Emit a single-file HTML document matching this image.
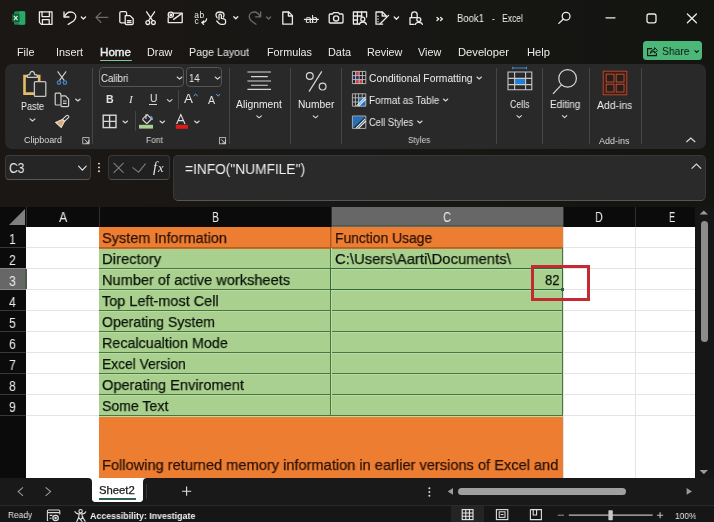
<!DOCTYPE html><html><head><meta charset="utf-8"><style>
html,body{margin:0;padding:0;width:714px;height:522px;overflow:hidden;background:linear-gradient(90deg,#1b1714 0%,#181715 50%,#131511 100%);font-family:"Liberation Sans",sans-serif;}
.r{position:absolute;}
.t{position:absolute;line-height:0;white-space:nowrap;will-change:transform;}
svg.r{overflow:visible;will-change:transform}
</style></head><body>
<svg class="r" style="left:0px;top:0px;" width="40" height="36" viewBox="0 0 40 36"><rect x="14" y="11.2" width="11.2" height="13.6" rx="1.6" fill="#1a8a52"/>
<rect x="19" y="11.2" width="6.2" height="13.6" rx="1.2" fill="#2aa86a"/>
<rect x="11.9" y="14" width="7.7" height="8" rx="1" fill="#135e36"/>
<path d="M13.9 15.8 L17.6 20.2 M17.6 15.8 L13.9 20.2" stroke="#d8f5e0" stroke-width="1.2"/></svg>
<svg class="r" style="left:0px;top:0px;" width="60" height="36" viewBox="0 0 60 36"><path d="M39.4 11.8 H52 V24.4 H41.4 L39.4 22.4 Z" fill="none" stroke="#ebebeb" stroke-width="1.3" stroke-linecap="round" stroke-linejoin="round"/>
<path d="M42 11.8 V16.6 H49.4 V11.8" fill="none" stroke="#ebebeb" stroke-width="1.3" stroke-linecap="round" stroke-linejoin="round"/>
<path d="M42.4 24.4 V19.6 H49.2 V24.4" fill="none" stroke="#ebebeb" stroke-width="1.3" stroke-linecap="round" stroke-linejoin="round"/></svg>
<svg class="r" style="left:0px;top:0px;" width="90" height="36" viewBox="0 0 90 36"><path d="M64 12 V17 H69" fill="none" stroke="#ebebeb" stroke-width="1.3" stroke-linecap="round" stroke-linejoin="round"/>
<path d="M64.4 16.6 C66 13.6 68 12 70.5 12 C73.6 12 75.8 14.2 75.8 16.8 C75.8 18.6 75 19.6 73.6 21 L68.2 24.4" fill="none" stroke="#ebebeb" stroke-width="1.3" stroke-linecap="round" stroke-linejoin="round"/>
<path d="M81.3 17 L83.4 19 L85.5 17" fill="none" stroke="#ebebeb" stroke-width="1.3" stroke-linecap="round" stroke-linejoin="round"/></svg>
<svg class="r" style="left:0px;top:0px;" width="112" height="36" viewBox="0 0 112 36"><path d="M96 17.4 H107.8 M100.8 12.6 L96 17.4 L100.8 22.2" fill="none" stroke="#6c6c6c" stroke-width="1.3" stroke-linecap="round" stroke-linejoin="round"/></svg>
<svg class="r" style="left:0px;top:0px;" width="140" height="36" viewBox="0 0 140 36"><path d="M125 22.8 H121.2 Q119.8 22.8 119.8 21.4 V13 Q119.8 11.6 121.2 11.6 H125.4 Q126.4 11.6 126.6 13 V15.4" fill="none" stroke="#ebebeb" stroke-width="1.3" stroke-linecap="round" stroke-linejoin="round"/>
<path d="M125.2 15.6 H130 L133.2 18.8 V23.4 Q133.2 24.5 132 24.5 H126.4 Q125.2 24.5 125.2 23.3 Z" fill="none" stroke="#ebebeb" stroke-width="1.3" stroke-linecap="round" stroke-linejoin="round"/>
<path d="M127.4 20.6 H131 M127.4 22.4 H131" fill="none" stroke="#ebebeb" stroke-width="1.3" stroke-linecap="round" stroke-linejoin="round"/></svg>
<svg class="r" style="left:0px;top:0px;" width="160" height="36" viewBox="0 0 160 36"><path d="M146.6 11.8 L152.6 20.6 M154.6 11.8 L148.6 20.6" fill="none" stroke="#ebebeb" stroke-width="1.3" stroke-linecap="round" stroke-linejoin="round"/>
<circle cx="147.8" cy="22.6" r="1.9" fill="none" stroke="#ebebeb" stroke-width="1.3" stroke-linecap="round" stroke-linejoin="round"/><circle cx="153.4" cy="22.6" r="1.9" fill="none" stroke="#ebebeb" stroke-width="1.3" stroke-linecap="round" stroke-linejoin="round"/></svg>
<svg class="r" style="left:0px;top:0px;" width="190" height="36" viewBox="0 0 190 36"><path d="M173 13.2 H182.2 V22.6 H168.2 V17.6" fill="none" stroke="#ebebeb" stroke-width="1.3" stroke-linecap="round" stroke-linejoin="round"/>
<path d="M173.6 19.4 L182 13.4" fill="none" stroke="#ebebeb" stroke-width="1.3" stroke-linecap="round" stroke-linejoin="round"/>
<circle cx="170.8" cy="14.8" r="2.6" fill="none" stroke="#ebebeb" stroke-width="1.3" stroke-linecap="round" stroke-linejoin="round"/><circle cx="170.9" cy="14.9" r="0.8" fill="none" stroke="#ebebeb" stroke-width="1.3" stroke-linecap="round" stroke-linejoin="round"/></svg>
<svg class="r" style="left:0px;top:0px;" width="212" height="36" viewBox="0 0 212 36"><text x="194.2" y="17.6" font-family="Liberation Sans" font-size="8.4" textLength="10" fill="#ebebeb">ab</text>
<text x="194.4" y="23.8" font-family="Liberation Sans" font-size="8.4" fill="#ebebeb">c</text>
<path d="M206.6 19 Q206 22.4 202.4 22.6 M203.8 21 L201.8 22.6 L203.6 24.2" fill="none" stroke="#ebebeb" stroke-width="1.3" stroke-linecap="round" stroke-linejoin="round"/></svg>
<svg class="r" style="left:0px;top:0px;" width="245" height="36" viewBox="0 0 245 36"><path d="M219 19.6 V15.6 Q219 14.2 220.2 14.2 Q221.4 14.2 221.4 15.6 V18.4 L224 18.8 Q225.6 19.2 225.6 21 V22.6 Q225.6 24.4 223.8 24.4 H221 Q219.8 24.4 218.8 23.2 L216.8 21" fill="none" stroke="#ebebeb" stroke-width="1.3" stroke-linecap="round" stroke-linejoin="round"/>
<path d="M217.2 17.8 Q216 16.4 216 15 Q216 12 220 12 Q224 12 224 15 Q224 16.2 223.4 17" fill="none" stroke="#ebebeb" stroke-width="1.3" stroke-linecap="round" stroke-linejoin="round"/>
<path d="M233.8 16.8 L235.8 18.8 L237.8 16.8" fill="none" stroke="#ebebeb" stroke-width="1.3" stroke-linecap="round" stroke-linejoin="round"/></svg>
<svg class="r" style="left:0px;top:0px;" width="275" height="36" viewBox="0 0 275 36"><path d="M260.6 11.8 V16.8 H255.6" fill="none" stroke="#6c6c6c" stroke-width="1.3" stroke-linecap="round" stroke-linejoin="round"/>
<path d="M260.2 16.4 C258.6 13.4 256.6 12 254.2 12 C251.2 12 249.2 14.2 249.2 16.8 C249.2 18.6 250 19.6 251.4 21 L256 24.2" fill="none" stroke="#6c6c6c" stroke-width="1.3" stroke-linecap="round" stroke-linejoin="round"/>
<path d="M266.6 17 L268.6 19 L270.6 17" fill="none" stroke="#6c6c6c" stroke-width="1.3" stroke-linecap="round" stroke-linejoin="round"/></svg>
<svg class="r" style="left:0px;top:0px;" width="300" height="36" viewBox="0 0 300 36"><path d="M282.8 12 H288.8 L292.4 15.6 V24.2 H282.8 Z" fill="none" stroke="#ebebeb" stroke-width="1.3" stroke-linecap="round" stroke-linejoin="round"/>
<path d="M288.4 12.2 V16 H292.2" fill="none" stroke="#ebebeb" stroke-width="1.3" stroke-linecap="round" stroke-linejoin="round"/></svg>
<svg class="r" style="left:0px;top:0px;" width="325" height="36" viewBox="0 0 325 36"><text x="305.2" y="22.8" font-family="Liberation Sans" font-size="11.6" textLength="12.4" fill="#ebebeb">ab</text>
<path d="M304.4 19.3 H318.4" fill="none" stroke="#ebebeb" stroke-width="1.3" stroke-linecap="round" stroke-linejoin="round"/></svg>
<svg class="r" style="left:0px;top:0px;" width="350" height="36" viewBox="0 0 350 36"><path d="M329.2 15 Q329.2 14 330.2 14 H332.4 L333.6 12.6 H338.4 L339.6 14 H342 Q343 14 343 15 V22.2 Q343 23 342 23 H330.2 Q329.2 23 329.2 22.2 Z" fill="none" stroke="#ebebeb" stroke-width="1.3" stroke-linecap="round" stroke-linejoin="round"/>
<circle cx="336.1" cy="18.4" r="2.6" fill="none" stroke="#ebebeb" stroke-width="1.3" stroke-linecap="round" stroke-linejoin="round"/></svg>
<svg class="r" style="left:0px;top:0px;" width="372" height="36" viewBox="0 0 372 36"><path d="M358.6 24 H353.4 V12 H366.6 V17" fill="none" stroke="#ebebeb" stroke-width="1.3" stroke-linecap="round" stroke-linejoin="round"/>
<path d="M353.4 16 H362 M353.4 20 H357.6 M357.4 12 V24 M361.6 12 V17" fill="none" stroke="#ebebeb" stroke-width="1.3" stroke-linecap="round" stroke-linejoin="round"/>
<circle cx="362.8" cy="19.2" r="2" fill="none" stroke="#ebebeb" stroke-width="1.3" stroke-linecap="round" stroke-linejoin="round"/><path d="M359.4 24.4 Q359.8 22 362.8 22 Q365.8 22 366.4 24.4" fill="none" stroke="#ebebeb" stroke-width="1.3" stroke-linecap="round" stroke-linejoin="round"/></svg>
<svg class="r" style="left:0px;top:0px;" width="402" height="36" viewBox="0 0 402 36"><path d="M382.6 24.2 H376 V12 H382.4 L386.2 15.8 V17" fill="none" stroke="#ebebeb" stroke-width="1.3" stroke-linecap="round" stroke-linejoin="round"/>
<path d="M382.2 12.2 V16 H386" fill="none" stroke="#ebebeb" stroke-width="1.3" stroke-linecap="round" stroke-linejoin="round"/>
<path d="M380.2 23.8 L388.6 15.4 M381.4 22.6 L388.6 15.4" fill="none" stroke="#ebebeb" stroke-width="1.3" stroke-linecap="round" stroke-linejoin="round"/>
<path d="M378 16.2 V16.4 M378 19 V19.2 M378 21.6 V21.8" fill="none" stroke="#ebebeb" stroke-width="1.3" stroke-linecap="round" stroke-linejoin="round"/>
<path d="M394.2 17 L396.4 19.2 L398.6 17" fill="none" stroke="#ebebeb" stroke-width="1.3" stroke-linecap="round" stroke-linejoin="round"/></svg>
<svg class="r" style="left:0px;top:0px;" width="428" height="36" viewBox="0 0 428 36"><path d="M411.6 17.4 V14.6 Q411.6 11.8 414.4 11.8 Q417.2 11.8 417.2 14.6 V17.4" fill="none" stroke="#ebebeb" stroke-width="1.3" stroke-linecap="round" stroke-linejoin="round"/>
<path d="M414 24.4 H410 V17.6 H416.6" fill="none" stroke="#ebebeb" stroke-width="1.3" stroke-linecap="round" stroke-linejoin="round"/>
<circle cx="418.8" cy="19.6" r="2" fill="none" stroke="#ebebeb" stroke-width="1.3" stroke-linecap="round" stroke-linejoin="round"/><path d="M415.4 24.4 Q415.8 22.4 418.8 22.4 Q421.8 22.4 422.4 24.4" fill="none" stroke="#ebebeb" stroke-width="1.3" stroke-linecap="round" stroke-linejoin="round"/></svg>
<svg class="r" style="left:0px;top:0px;" width="450" height="36" viewBox="0 0 450 36"><path d="M437 17.4 L438.8 19 L437 20.6 M440.6 17.4 L442.4 19 L440.6 20.6" fill="none" stroke="#ebebeb" stroke-width="1.3" stroke-linecap="round" stroke-linejoin="round"/></svg>
<svg class="r" style="left:0px;top:0px;" width="580" height="36" viewBox="0 0 580 36"><circle cx="566.1" cy="16.2" r="3.9" fill="none" stroke="#ebebeb" stroke-width="1.3" stroke-linecap="round" stroke-linejoin="round"/><path d="M563.4 19 L558.8 23.4" fill="none" stroke="#ebebeb" stroke-width="1.3" stroke-linecap="round" stroke-linejoin="round"/></svg>
<svg class="r" style="left:0px;top:0px;" width="714" height="36" viewBox="0 0 714 36"><path d="M606 17.8 H615" fill="none" stroke="#ebebeb" stroke-width="1.3" stroke-linecap="round" stroke-linejoin="round"/>
<rect x="647" y="14" width="9" height="8.8" rx="2" fill="none" stroke="#ebebeb" stroke-width="1.3" stroke-linecap="round" stroke-linejoin="round"/>
<path d="M687.4 14 L696.4 22.8 M696.4 14 L687.4 22.8" fill="none" stroke="#ebebeb" stroke-width="1.3" stroke-linecap="round" stroke-linejoin="round"/></svg>
<div class="r" style="left:5px;top:64px;width:701px;height:85px;background:#292929;border-radius:7px;"></div>
<div class="r" style="left:92.1px;top:68px;width:1px;height:76px;background:#454545;"></div>
<div class="r" style="left:229.2px;top:68px;width:1px;height:76px;background:#454545;"></div>
<div class="r" style="left:290.4px;top:68px;width:1px;height:76px;background:#454545;"></div>
<div class="r" style="left:340.8px;top:68px;width:1px;height:76px;background:#454545;"></div>
<div class="r" style="left:496.3px;top:68px;width:1px;height:76px;background:#454545;"></div>
<div class="r" style="left:541.9px;top:68px;width:1px;height:76px;background:#454545;"></div>
<div class="r" style="left:588.5px;top:68px;width:1px;height:76px;background:#454545;"></div>
<div class="r" style="left:641.0px;top:68px;width:1px;height:76px;background:#454545;"></div>
<svg class="r" style="left:0px;top:0px;" width="100" height="150" viewBox="0 0 100 150"><path d="M30 76 H24.5 V93.6 H34" fill="none" stroke="#e6bd66" stroke-width="2.6"/>
<path d="M34 76 H39.2 V81" fill="none" stroke="#e6bd66" stroke-width="2.6"/>
<path d="M27.4 77.4 H37.2 V76 Q37.2 74.6 35.6 74.6 H34.6 Q34.4 71.4 32.2 71.4 Q30 71.4 29.8 74.6 H28.8 Q27.4 74.6 27.4 76 Z" fill="#2a2a2a" stroke="#c8c8c8" stroke-width="1.2"/>
<rect x="34.4" y="81.6" width="11.4" height="14.8" rx="1" fill="#2a2a2a" stroke="#c4c4c4" stroke-width="1.3"/>
<path d="M57.6 71.4 L64.4 80.6 M66.2 71.4 L59.4 80.6" stroke="#d0d0d0" stroke-width="1.1" fill="none"/>
<circle cx="59" cy="82.6" r="1.7" fill="none" stroke="#4482c4" stroke-width="1.3"/>
<circle cx="64.9" cy="82.6" r="1.7" fill="none" stroke="#4482c4" stroke-width="1.3"/>
<path d="M60.6 105 H56.2 Q55.2 105 55.2 104 V94 Q55.2 93.2 56.2 93.2 H59.8 Q60.8 93.2 60.8 94.2 V95.6" fill="none" stroke="#cfcfcf" stroke-width="1.2"/>
<path d="M61 95.8 H65.4 L68.6 99 V105.6 Q68.6 106.6 67.6 106.6 H62 Q61 106.6 61 105.6 Z" fill="none" stroke="#cfcfcf" stroke-width="1.2"/>
<path d="M63 101 H66.6 M63 103.4 H66.6" stroke="#cfcfcf" stroke-width="1.1"/>
<path d="M68.2 115.6 Q69.4 116.6 68.4 117.6 L64.4 121.4 L62.4 119.4 L66.4 115.6 Q67.4 114.8 68.2 115.6 Z" fill="none" stroke="#e0e0e0" stroke-width="1.1"/>
<path d="M62.4 119.4 L64.4 121.4 L61.2 127.4 L55.6 122.4 Z" fill="#e8a766" stroke="#e0e0e0" stroke-width="1.1" stroke-linejoin="round"/></svg>
<div class="t" style="left:21.0px;top:106.80px;font-size:10.4px;color:#ededed;font-weight:normal;transform:scaleX(0.8656);transform-origin:0 0;">Paste</div>
<svg class="r" style="left:0px;top:0px;pointer-events:none" width="714" height="522" viewBox="0 0 714 522"><path d="M30 118.8 L32.5 121.0 L35 118.8" fill="none" stroke="#d8d8d8" stroke-width="1.1" stroke-linecap="round" stroke-linejoin="round"/></svg>
<svg class="r" style="left:0px;top:0px;pointer-events:none" width="714" height="522" viewBox="0 0 714 522"><path d="M75.6 99 L77.89999999999999 101 L80.19999999999999 99" fill="none" stroke="#d8d8d8" stroke-width="1.1" stroke-linecap="round" stroke-linejoin="round"/></svg>
<div class="t" style="left:24.0px;top:140.15px;font-size:8.8px;color:#d8d8d8;font-weight:normal;transform:scaleX(1.0089);transform-origin:0 0;">Clipboard</div>
<svg class="r" style="left:0px;top:0px;" width="100" height="150" viewBox="0 0 100 150"><rect x="82.8" y="137.6" width="6.2" height="6.2" fill="none" stroke="#bdbdbd" stroke-width="0.9"/><path d="M84.6 139.4 L88.6 143.4 M85.6 143.2 H88.8 V140" fill="none" stroke="#d0d0d0" stroke-width="1"/></svg>
<div class="r" style="left:99.4px;top:67.4px;width:85px;height:20px;background:transparent;box-sizing:border-box;border:1px solid #555;border-radius:4px;"></div>
<div class="r" style="left:186.4px;top:67.4px;width:36px;height:20px;background:transparent;box-sizing:border-box;border:1px solid #555;border-radius:4px;"></div>
<div class="t" style="left:101.3px;top:78.13px;font-size:10.6px;color:#ededed;font-weight:normal;transform:scaleX(0.9051);transform-origin:0 0;">Calibri</div>
<div class="t" style="left:188.9px;top:78.13px;font-size:10.6px;color:#ededed;font-weight:normal;transform:scaleX(0.8754);transform-origin:0 0;">14</div>
<svg class="r" style="left:0px;top:0px;pointer-events:none" width="714" height="522" viewBox="0 0 714 522"><path d="M177.2 77 L179.6 79.2 L182.0 77" fill="none" stroke="#d8d8d8" stroke-width="1.1" stroke-linecap="round" stroke-linejoin="round"/></svg>
<svg class="r" style="left:0px;top:0px;pointer-events:none" width="714" height="522" viewBox="0 0 714 522"><path d="M215.2 77 L217.6 79.2 L220.0 77" fill="none" stroke="#d8d8d8" stroke-width="1.1" stroke-linecap="round" stroke-linejoin="round"/></svg>
<div class="t" style="left:106.2px;top:99.23px;font-size:10.6px;color:#e0e0e0;font-weight:bold;">B</div>
<div class="t" style="left:128.6px;top:98.95px;font-size:11.4px;color:#e0e0e0;font-weight:normal;font-family:'Liberation Serif',serif;font-style:italic;">I</div>
<div class="t" style="left:149.6px;top:98.80px;font-size:10.4px;color:#e0e0e0;font-weight:normal;">U</div>
<div class="r" style="left:149.4px;top:104px;width:8px;height:1.2px;background:#d8d8d8;"></div>
<svg class="r" style="left:0px;top:0px;pointer-events:none" width="714" height="522" viewBox="0 0 714 522"><path d="M167.4 99.6 L169.70000000000002 101.6 L172.0 99.6" fill="none" stroke="#d8d8d8" stroke-width="1.1" stroke-linecap="round" stroke-linejoin="round"/></svg>
<div class="t" style="left:183.6px;top:99.16px;font-size:13.4px;color:#e0e0e0;font-weight:normal;">A</div>
<div class="t" style="left:207.6px;top:100.13px;font-size:10.6px;color:#e0e0e0;font-weight:normal;">A</div>
<svg class="r" style="left:0px;top:0px;" width="230" height="150" viewBox="0 0 230 150"><path d="M193.6 96 L195.6 94.2 L197.6 96" fill="none" stroke="#6ab0e8" stroke-width="1"/>
<path d="M216.2 94.2 L218.2 96 L220.2 94.2" fill="none" stroke="#6ab0e8" stroke-width="1"/>
<rect x="103.2" y="115.2" width="12.8" height="12.4" fill="none" stroke="#d8d8d8" stroke-width="1.4"/>
<path d="M109.6 115.2 V127.6 M103.2 121.4 H116" stroke="#d8d8d8" stroke-width="1.4"/>
<path d="M143 118.6 L147.2 114.6 L151.6 119 L147.6 123 Q146.8 123.8 146 123 L143 120 Q142.4 119.4 143 118.6 Z" fill="none" stroke="#d8d8d8" stroke-width="1.1"/>
<path d="M146 114.2 V119" stroke="#d8d8d8" stroke-width="1.1"/>
<path d="M150.6 116.4 Q152.6 117 152.4 120" fill="none" stroke="#5aa0e0" stroke-width="1.2"/>
<rect x="139" y="124.8" width="14" height="3.8" fill="#a9d08e"/>
<path d="M176.6 124 L180.8 114.6 L185 124 M178.2 120.6 H183.4" fill="none" stroke="#e0e0e0" stroke-width="1.1"/>
<rect x="175.8" y="124.8" width="12.2" height="4" fill="#e01a1a"/></svg>
<svg class="r" style="left:0px;top:0px;pointer-events:none" width="714" height="522" viewBox="0 0 714 522"><path d="M123 121 L125.3 123 L127.6 121" fill="none" stroke="#d8d8d8" stroke-width="1.1" stroke-linecap="round" stroke-linejoin="round"/></svg>
<svg class="r" style="left:0px;top:0px;pointer-events:none" width="714" height="522" viewBox="0 0 714 522"><path d="M160 121 L162.3 123 L164.6 121" fill="none" stroke="#d8d8d8" stroke-width="1.1" stroke-linecap="round" stroke-linejoin="round"/></svg>
<svg class="r" style="left:0px;top:0px;pointer-events:none" width="714" height="522" viewBox="0 0 714 522"><path d="M194.6 121 L196.9 123 L199.2 121" fill="none" stroke="#d8d8d8" stroke-width="1.1" stroke-linecap="round" stroke-linejoin="round"/></svg>
<div class="r" style="left:134.5px;top:111px;width:1px;height:20px;background:#454545;"></div>
<div class="r" style="left:178.3px;top:90px;width:1px;height:19px;background:#454545;"></div>
<div class="t" style="left:145.7px;top:139.55px;font-size:8.8px;color:#d8d8d8;font-weight:normal;transform:scaleX(0.9545);transform-origin:0 0;">Font</div>
<svg class="r" style="left:0px;top:0px;" width="230" height="150" viewBox="0 0 230 150"><rect x="219.4" y="137.6" width="6.2" height="6.2" fill="none" stroke="#bdbdbd" stroke-width="0.9"/><path d="M221.2 139.4 L225.2 143.4 M222.2 143.2 H225.4 V140" fill="none" stroke="#d0d0d0" stroke-width="1"/></svg>
<svg class="r" style="left:0px;top:0px;" width="345" height="150" viewBox="0 0 345 150"><path d="M247.4 72 H271 M251 76.6 H267.8 M247.4 81 H271 M251 85.3 H267.8 M247.4 89.4 H271" stroke="#d6d6d6" stroke-width="1.1"/>
<circle cx="309.8" cy="76" r="3.4" fill="none" stroke="#d8d8d8" stroke-width="1.2"/>
<circle cx="322.6" cy="86.6" r="3.4" fill="none" stroke="#d8d8d8" stroke-width="1.2"/>
<path d="M321.8 71.4 L309 91.6" stroke="#d8d8d8" stroke-width="1.2"/></svg>
<div class="t" style="left:236.4px;top:104.67px;font-size:10.2px;color:#ededed;font-weight:normal;transform:scaleX(1.0124);transform-origin:0 0;">Alignment</div>
<svg class="r" style="left:0px;top:0px;pointer-events:none" width="714" height="522" viewBox="0 0 714 522"><path d="M256.8 115.8 L259.1 117.8 L261.40000000000003 115.8" fill="none" stroke="#d8d8d8" stroke-width="1.1" stroke-linecap="round" stroke-linejoin="round"/></svg>
<div class="t" style="left:297.6px;top:104.67px;font-size:10.2px;color:#ededed;font-weight:normal;transform:scaleX(1.0011);transform-origin:0 0;">Number</div>
<svg class="r" style="left:0px;top:0px;pointer-events:none" width="714" height="522" viewBox="0 0 714 522"><path d="M313.2 115.8 L315.5 117.8 L317.8 115.8" fill="none" stroke="#d8d8d8" stroke-width="1.1" stroke-linecap="round" stroke-linejoin="round"/></svg>
<svg class="r" style="left:0px;top:0px;" width="500" height="150" viewBox="0 0 500 150"><rect x="352.4" y="71.4" width="13.4" height="12.2" fill="#241c1c"/>
<rect x="355.6" y="71.4" width="3.6" height="4.2" fill="#d0383a"/>
<rect x="355.6" y="79.6" width="6.8" height="4" fill="#d0383a"/>
<rect x="352.4" y="75.6" width="6.8" height="4" fill="#24306a"/>
<path d="M352.4 71.4 H365.8 V83.6 H352.4 Z M352.4 75.6 H365.8 M352.4 79.6 H365.8 M355.6 71.4 V83.6 M359.2 71.4 V83.6 M362.4 71.4 V83.6" fill="none" stroke="#c4c4c4" stroke-width="0.9"/>
<rect x="358.4" y="97.8" width="7.4" height="8.4" fill="#2370c0"/>
<path d="M352.4 93.8 H365.8 V106.2 H352.4 Z M352.4 97.8 H365.8 M352.4 102 H358.4 M355.4 93.8 V106.2 M358.6 93.8 V106.2 M362.2 93.8 V97.8" fill="none" stroke="#bdbdbd" stroke-width="0.9"/>
<path d="M356.6 105.8 L365.2 97.2 M358.6 106.2 L365.8 99" stroke="#dfefff" stroke-width="1.1"/>
<path d="M353 116.6 H365.4 L353 128 Z" fill="#2370c0"/>
<path d="M352.4 116 H365.8 V128.4 H352.4 Z" fill="none" stroke="#bdbdbd" stroke-width="0.9"/>
<path d="M356.2 128 L365 119.2 M358.4 128.4 L365.8 121" stroke="#dfefff" stroke-width="1.1"/></svg>
<div class="t" style="left:369.0px;top:79.17px;font-size:10.2px;color:#ededed;font-weight:normal;transform:scaleX(1.0106);transform-origin:0 0;">Conditional Formatting</div>
<svg class="r" style="left:0px;top:0px;pointer-events:none" width="714" height="522" viewBox="0 0 714 522"><path d="M477 77 L479.2 79 L481.4 77" fill="none" stroke="#d8d8d8" stroke-width="1.1" stroke-linecap="round" stroke-linejoin="round"/></svg>
<div class="t" style="left:369.0px;top:100.87px;font-size:10.2px;color:#ededed;font-weight:normal;transform:scaleX(0.9639);transform-origin:0 0;">Format as Table</div>
<svg class="r" style="left:0px;top:0px;pointer-events:none" width="714" height="522" viewBox="0 0 714 522"><path d="M443.4 99 L445.59999999999997 101 L447.79999999999995 99" fill="none" stroke="#d8d8d8" stroke-width="1.1" stroke-linecap="round" stroke-linejoin="round"/></svg>
<div class="t" style="left:369.0px;top:123.17px;font-size:10.2px;color:#ededed;font-weight:normal;transform:scaleX(0.9192);transform-origin:0 0;">Cell Styles</div>
<svg class="r" style="left:0px;top:0px;pointer-events:none" width="714" height="522" viewBox="0 0 714 522"><path d="M417.6 121 L419.8 123 L422.0 121" fill="none" stroke="#d8d8d8" stroke-width="1.1" stroke-linecap="round" stroke-linejoin="round"/></svg>
<div class="t" style="left:407.7px;top:140.35px;font-size:8.8px;color:#d8d8d8;font-weight:normal;transform:scaleX(0.9299);transform-origin:0 0;">Styles</div>
<svg class="r" style="left:0px;top:0px;" width="714" height="150" viewBox="0 0 714 150"><path d="M512.7 68 H526.5 M512.7 66.8 V69.2 M526.5 66.8 V69.2" stroke="#3d8ad8" stroke-width="1.1"/>
<rect x="514.7" y="78.6" width="10.8" height="6" fill="#1f7fd6"/>
<path d="M508 72 H531.8 V89.8 H508 Z M508 78.4 H531.8 M508 84.6 H531.8 M514.6 72 V89.8 M525.6 72 V89.8" fill="none" stroke="#c8c8c8" stroke-width="1.1"/>
<circle cx="567.6" cy="78.4" r="8.8" fill="none" stroke="#d8d8d8" stroke-width="1.2"/>
<path d="M561.4 84.8 L553 93.8" stroke="#d8d8d8" stroke-width="1.2"/>
<rect x="603.2" y="71.2" width="23.6" height="23.6" fill="#4e160c" stroke="#b0553a" stroke-width="0.9"/>
<rect x="606.2" y="74.2" width="7.8" height="7.8" fill="#2a1e1c" stroke="#b05a3c" stroke-width="0.9"/>
<rect x="616.2" y="74.2" width="7.8" height="7.8" fill="#2a1e1c" stroke="#b05a3c" stroke-width="0.9"/>
<rect x="606.2" y="84.2" width="7.8" height="7.8" fill="#2a1e1c" stroke="#b05a3c" stroke-width="0.9"/>
<rect x="616.2" y="84.2" width="7.8" height="7.8" fill="#2a1e1c" stroke="#b05a3c" stroke-width="0.9"/>
<path d="M686.4 142 L690.8 138 L695.2 142" fill="none" stroke="#d8d8d8" stroke-width="1.2"/></svg>
<div class="t" style="left:509.8px;top:104.67px;font-size:10.2px;color:#ededed;font-weight:normal;transform:scaleX(0.8636);transform-origin:0 0;">Cells</div>
<svg class="r" style="left:0px;top:0px;pointer-events:none" width="714" height="522" viewBox="0 0 714 522"><path d="M517 115.6 L519.2 117.6 L521.4 115.6" fill="none" stroke="#d8d8d8" stroke-width="1.1" stroke-linecap="round" stroke-linejoin="round"/></svg>
<div class="t" style="left:550.0px;top:104.67px;font-size:10.2px;color:#ededed;font-weight:normal;transform:scaleX(0.9740);transform-origin:0 0;">Editing</div>
<svg class="r" style="left:0px;top:0px;pointer-events:none" width="714" height="522" viewBox="0 0 714 522"><path d="M562.4 115.6 L564.6 117.6 L566.8 115.6" fill="none" stroke="#d8d8d8" stroke-width="1.1" stroke-linecap="round" stroke-linejoin="round"/></svg>
<div class="t" style="left:597.0px;top:105.03px;font-size:10.6px;color:#ededed;font-weight:normal;transform:scaleX(0.9851);transform-origin:0 0;">Add-ins</div>
<div class="t" style="left:599.0px;top:140.95px;font-size:8.8px;color:#d8d8d8;font-weight:normal;transform:scaleX(1.0224);transform-origin:0 0;">Add-ins</div>
<div class="t" style="left:457.3px;top:18.50px;font-size:10.4px;color:#f2f2f2;font-weight:normal;transform:scaleX(0.9124);transform-origin:0 0;">Book1</div>
<div class="t" style="left:492.0px;top:18.50px;font-size:10.4px;color:#f2f2f2;font-weight:normal;transform:scaleX(0.8037);transform-origin:0 0;">-</div>
<div class="t" style="left:501.5px;top:18.50px;font-size:10.4px;color:#f2f2f2;font-weight:normal;transform:scaleX(0.8180);transform-origin:0 0;">Excel</div>
<div class="t" style="left:16.5px;top:52.26px;font-size:10.8px;color:#ececec;font-weight:normal;transform:scaleX(0.9777);transform-origin:0 0;">File</div>
<div class="t" style="left:55.7px;top:52.26px;font-size:10.8px;color:#ececec;font-weight:normal;transform:scaleX(1.0000);transform-origin:0 0;">Insert</div>
<div class="t" style="left:100.0px;top:52.26px;font-size:10.8px;color:#ececec;font-weight:normal;-webkit-text-stroke:0.4px currentColor;transform:scaleX(1.0750);transform-origin:0 0;">Home</div>
<div class="t" style="left:147.0px;top:52.26px;font-size:10.8px;color:#ececec;font-weight:normal;transform:scaleX(0.9914);transform-origin:0 0;">Draw</div>
<div class="t" style="left:189.0px;top:52.26px;font-size:10.8px;color:#ececec;font-weight:normal;transform:scaleX(0.9894);transform-origin:0 0;">Page Layout</div>
<div class="t" style="left:267.4px;top:52.26px;font-size:10.8px;color:#ececec;font-weight:normal;transform:scaleX(0.9903);transform-origin:0 0;">Formulas</div>
<div class="t" style="left:328.0px;top:52.26px;font-size:10.8px;color:#ececec;font-weight:normal;transform:scaleX(1.0069);transform-origin:0 0;">Data</div>
<div class="t" style="left:367.0px;top:52.26px;font-size:10.8px;color:#ececec;font-weight:normal;transform:scaleX(0.9880);transform-origin:0 0;">Review</div>
<div class="t" style="left:418.0px;top:52.26px;font-size:10.8px;color:#ececec;font-weight:normal;transform:scaleX(0.9905);transform-origin:0 0;">View</div>
<div class="t" style="left:458.0px;top:52.26px;font-size:10.8px;color:#ececec;font-weight:normal;transform:scaleX(1.0356);transform-origin:0 0;">Developer</div>
<div class="t" style="left:527.0px;top:52.26px;font-size:10.8px;color:#ececec;font-weight:normal;transform:scaleX(1.0363);transform-origin:0 0;">Help</div>
<div class="r" style="left:100px;top:59.6px;width:32px;height:1.6px;background:#80c49a;border-radius:1px;"></div>
<div class="r" style="left:643.4px;top:40.9px;width:58.8px;height:19.6px;background:#4cb779;border-radius:3.5px;"></div>
<div class="t" style="left:661.5px;top:51.36px;font-size:10.8px;color:#0c1a10;font-weight:normal;transform:scaleX(0.9537);transform-origin:0 0;">Share</div>
<svg class="r" style="left:0px;top:0px;" width="714" height="522" viewBox="0 0 714 522"><path d="M652 48.6 H647.6 V55.6 H656.4 V53" fill="none" stroke="#0c1a10" stroke-width="1.1"/>
<path d="M650.2 53.4 Q650.6 49.6 654.6 49.4 V47.6 L657.4 50.4 L654.6 53.2 V51.4 Q651.6 51.4 650.2 53.4 Z" fill="none" stroke="#0c1a10" stroke-width="1"/>
<path d="M694.6 50.4 L696.7 52.4 L698.8 50.4" fill="none" stroke="#0c1a10" stroke-width="1.1"/></svg>
<div class="r" style="left:5px;top:155px;width:86px;height:25px;background:#252525;box-sizing:border-box;border:1px solid #3c3c3c;border-bottom-color:#585858;border-radius:4px;"></div>
<div class="t" style="left:9.2px;top:168.35px;font-size:14px;color:#f0f0f0;font-weight:normal;transform:scaleX(0.8594);transform-origin:0 0;">C3</div>
<div class="r" style="left:108px;top:155px;width:62px;height:25px;background:#202020;box-sizing:border-box;border:1px solid #383838;border-bottom-color:#505050;border-radius:4px;"></div>
<div class="r" style="left:173px;top:155px;width:533px;height:46px;background:#2a2a2a;box-sizing:border-box;border:1px solid #383838;border-bottom-color:#565656;border-radius:5px;"></div>
<div class="t" style="left:184.8px;top:168.75px;font-size:14px;color:#f0f0f0;font-weight:normal;transform:scaleX(0.9807);transform-origin:0 0;">=INFO(&quot;NUMFILE&quot;)</div>
<div class="r" style="left:0px;top:207px;width:695px;height:20px;background:#0b0b0b;"></div>
<div class="r" style="left:0px;top:227px;width:26px;height:251px;background:#0b0b0b;"></div>
<div class="r" style="left:26px;top:227px;width:669px;height:251px;background:#ffffff;"></div>
<div class="r" style="left:331px;top:207px;width:232px;height:20px;background:#676767;"></div>
<div class="r" style="left:331px;top:224.6px;width:232px;height:1.8px;background:#4c5c48;"></div>
<div class="r" style="left:0px;top:269px;width:26px;height:21px;background:#676767;"></div>
<div class="r" style="left:25px;top:269px;width:1.5px;height:21px;background:#4c5c48;"></div>
<div class="r" style="left:99px;top:207px;width:1px;height:20px;background:#303030;"></div>
<div class="r" style="left:331px;top:207px;width:1px;height:20px;background:#303030;"></div>
<div class="r" style="left:563px;top:207px;width:1px;height:20px;background:#303030;"></div>
<div class="r" style="left:635px;top:207px;width:1px;height:20px;background:#303030;"></div>
<div class="r" style="left:26px;top:207px;width:1px;height:20px;background:#303030;"></div>
<svg class="r" style="left:0px;top:207px;" width="26" height="20" viewBox="0 0 26 20"><polygon points="9,18 25,18 25,2" fill="#808080"/></svg>
<div class="t" style="left:58.8px;top:217.45px;font-size:14px;color:#ececec;font-weight:normal;transform:scaleX(0.8955);transform-origin:0 0;">A</div>
<div class="t" style="left:212.0px;top:217.45px;font-size:14px;color:#ececec;font-weight:normal;transform:scaleX(0.7519);transform-origin:0 0;">B</div>
<div class="t" style="left:443.2px;top:217.45px;font-size:14px;color:#ececec;font-weight:normal;transform:scaleX(0.8036);transform-origin:0 0;">C</div>
<div class="t" style="left:595.4px;top:217.45px;font-size:14px;color:#ececec;font-weight:normal;transform:scaleX(0.7738);transform-origin:0 0;">D</div>
<div class="t" style="left:669.4px;top:217.45px;font-size:14px;color:#ececec;font-weight:normal;transform:scaleX(0.6660);transform-origin:0 0;">E</div>
<div class="t" style="left:8.8px;top:238.75px;font-size:14px;color:#ececec;font-weight:normal;transform:scaleX(0.8880);transform-origin:0 0;">1</div>
<div class="r" style="left:0px;top:247px;width:26px;height:1px;background:#383838;"></div>
<div class="t" style="left:8.8px;top:259.75px;font-size:14px;color:#ececec;font-weight:normal;transform:scaleX(0.8880);transform-origin:0 0;">2</div>
<div class="r" style="left:0px;top:268px;width:26px;height:1px;background:#858585;"></div>
<div class="t" style="left:8.8px;top:280.75px;font-size:14px;color:#ececec;font-weight:normal;transform:scaleX(0.8880);transform-origin:0 0;">3</div>
<div class="r" style="left:0px;top:289px;width:26px;height:1px;background:#858585;"></div>
<div class="t" style="left:8.8px;top:301.75px;font-size:14px;color:#ececec;font-weight:normal;transform:scaleX(0.8880);transform-origin:0 0;">4</div>
<div class="r" style="left:0px;top:310px;width:26px;height:1px;background:#383838;"></div>
<div class="t" style="left:8.8px;top:322.75px;font-size:14px;color:#ececec;font-weight:normal;transform:scaleX(0.8880);transform-origin:0 0;">5</div>
<div class="r" style="left:0px;top:331px;width:26px;height:1px;background:#383838;"></div>
<div class="t" style="left:8.8px;top:343.75px;font-size:14px;color:#ececec;font-weight:normal;transform:scaleX(0.8880);transform-origin:0 0;">6</div>
<div class="r" style="left:0px;top:352px;width:26px;height:1px;background:#383838;"></div>
<div class="t" style="left:8.8px;top:364.75px;font-size:14px;color:#ececec;font-weight:normal;transform:scaleX(0.8880);transform-origin:0 0;">7</div>
<div class="r" style="left:0px;top:373px;width:26px;height:1px;background:#383838;"></div>
<div class="t" style="left:8.8px;top:385.75px;font-size:14px;color:#ececec;font-weight:normal;transform:scaleX(0.8880);transform-origin:0 0;">8</div>
<div class="r" style="left:0px;top:394px;width:26px;height:1px;background:#383838;"></div>
<div class="t" style="left:8.8px;top:406.75px;font-size:14px;color:#ececec;font-weight:normal;transform:scaleX(0.8880);transform-origin:0 0;">9</div>
<div class="r" style="left:0px;top:415px;width:26px;height:1px;background:#383838;"></div>
<div class="r" style="left:26px;top:247px;width:669px;height:1px;background:#e4e4e4;"></div>
<div class="r" style="left:26px;top:268px;width:669px;height:1px;background:#e4e4e4;"></div>
<div class="r" style="left:26px;top:289px;width:669px;height:1px;background:#e4e4e4;"></div>
<div class="r" style="left:26px;top:310px;width:669px;height:1px;background:#e4e4e4;"></div>
<div class="r" style="left:26px;top:331px;width:669px;height:1px;background:#e4e4e4;"></div>
<div class="r" style="left:26px;top:352px;width:669px;height:1px;background:#e4e4e4;"></div>
<div class="r" style="left:26px;top:373px;width:669px;height:1px;background:#e4e4e4;"></div>
<div class="r" style="left:26px;top:394px;width:669px;height:1px;background:#e4e4e4;"></div>
<div class="r" style="left:26px;top:415px;width:669px;height:1px;background:#e4e4e4;"></div>
<div class="r" style="left:99px;top:227px;width:1px;height:251px;background:#e4e4e4;"></div>
<div class="r" style="left:563px;top:227px;width:1px;height:251px;background:#e4e4e4;"></div>
<div class="r" style="left:635px;top:227px;width:1px;height:251px;background:#e4e4e4;"></div>
<div class="r" style="left:99px;top:227px;width:464px;height:21px;background:#ed7d31;"></div>
<div class="r" style="left:99px;top:248px;width:464px;height:168px;background:#a9d08e;"></div>
<div class="r" style="left:99px;top:416px;width:464px;height:62px;background:#ed7d31;"></div>
<div class="r" style="left:99px;top:268px;width:464px;height:1px;background:#4a7440;"></div>
<div class="r" style="left:99px;top:269px;width:464px;height:1px;background:#b9dca2;"></div>
<div class="r" style="left:99px;top:289px;width:464px;height:1px;background:#4a7440;"></div>
<div class="r" style="left:99px;top:290px;width:464px;height:1px;background:#b9dca2;"></div>
<div class="r" style="left:99px;top:310px;width:464px;height:1px;background:#4a7440;"></div>
<div class="r" style="left:99px;top:311px;width:464px;height:1px;background:#b9dca2;"></div>
<div class="r" style="left:99px;top:331px;width:464px;height:1px;background:#4a7440;"></div>
<div class="r" style="left:99px;top:332px;width:464px;height:1px;background:#b9dca2;"></div>
<div class="r" style="left:99px;top:352px;width:464px;height:1px;background:#4a7440;"></div>
<div class="r" style="left:99px;top:353px;width:464px;height:1px;background:#b9dca2;"></div>
<div class="r" style="left:99px;top:373px;width:464px;height:1px;background:#4a7440;"></div>
<div class="r" style="left:99px;top:374px;width:464px;height:1px;background:#b9dca2;"></div>
<div class="r" style="left:99px;top:394px;width:464px;height:1px;background:#4a7440;"></div>
<div class="r" style="left:99px;top:395px;width:464px;height:1px;background:#b9dca2;"></div>
<div class="r" style="left:99px;top:415px;width:464px;height:1px;background:#4a7440;"></div>
<div class="r" style="left:99px;top:416px;width:464px;height:1px;background:#b9dca2;"></div>
<div class="r" style="left:99px;top:246.5px;width:464px;height:1px;background:#b8601f;"></div>
<div class="r" style="left:99px;top:247.5px;width:464px;height:1px;background:#c86a28;"></div>
<div class="r" style="left:330px;top:227px;width:1px;height:20px;background:#b05a20;"></div>
<div class="r" style="left:331px;top:227px;width:1px;height:20px;background:#d06e2c;"></div>
<div class="r" style="left:330px;top:248px;width:1px;height:168px;background:#4a7440;"></div>
<div class="r" style="left:331px;top:248px;width:1px;height:168px;background:#b9dca2;"></div>
<div class="r" style="left:562px;top:248px;width:1px;height:168px;background:#4a7440;"></div>
<div class="r" style="left:99px;top:415px;width:464px;height:1px;background:#4a7440;"></div>
<div class="r" style="left:330px;top:268px;width:233px;height:1px;background:#2f6a3a;"></div>
<div class="r" style="left:330px;top:289px;width:233px;height:1px;background:#2f6a3a;"></div>
<div class="r" style="left:330px;top:268px;width:1px;height:22px;background:#2f6a3a;"></div>
<div class="r" style="left:562px;top:268px;width:1px;height:22px;background:#2f6a3a;"></div>
<div class="t" style="left:101.9px;top:237.70px;font-size:15px;color:#2a1208;font-weight:normal;-webkit-text-stroke:0.25px currentColor;transform:scaleX(0.9673);transform-origin:0 0;">System Information</div>
<div class="t" style="left:334.6px;top:237.70px;font-size:15px;color:#2a1208;font-weight:normal;-webkit-text-stroke:0.25px currentColor;transform:scaleX(0.9251);transform-origin:0 0;">Function Usage</div>
<div class="t" style="left:101.9px;top:258.70px;font-size:15px;color:#0c140a;font-weight:normal;-webkit-text-stroke:0.25px currentColor;transform:scaleX(0.9867);transform-origin:0 0;">Directory</div>
<div class="t" style="left:101.9px;top:279.70px;font-size:15px;color:#0c140a;font-weight:normal;-webkit-text-stroke:0.25px currentColor;transform:scaleX(0.9720);transform-origin:0 0;">Number of active worksheets</div>
<div class="t" style="left:101.9px;top:300.70px;font-size:15px;color:#0c140a;font-weight:normal;-webkit-text-stroke:0.25px currentColor;transform:scaleX(0.9653);transform-origin:0 0;">Top Left-most Cell</div>
<div class="t" style="left:101.9px;top:321.70px;font-size:15px;color:#0c140a;font-weight:normal;-webkit-text-stroke:0.25px currentColor;transform:scaleX(0.9411);transform-origin:0 0;">Operating System</div>
<div class="t" style="left:101.9px;top:342.70px;font-size:15px;color:#0c140a;font-weight:normal;-webkit-text-stroke:0.25px currentColor;transform:scaleX(0.9547);transform-origin:0 0;">Recalcualtion Mode</div>
<div class="t" style="left:101.9px;top:363.70px;font-size:15px;color:#0c140a;font-weight:normal;-webkit-text-stroke:0.25px currentColor;transform:scaleX(0.9219);transform-origin:0 0;">Excel Version</div>
<div class="t" style="left:101.9px;top:384.70px;font-size:15px;color:#0c140a;font-weight:normal;-webkit-text-stroke:0.25px currentColor;transform:scaleX(0.9728);transform-origin:0 0;">Operating Enviroment</div>
<div class="t" style="left:101.9px;top:405.70px;font-size:15px;color:#0c140a;font-weight:normal;-webkit-text-stroke:0.25px currentColor;transform:scaleX(0.9394);transform-origin:0 0;">Some Text</div>
<div class="t" style="left:334.6px;top:258.70px;font-size:15px;color:#0c140a;font-weight:normal;-webkit-text-stroke:0.25px currentColor;transform:scaleX(0.9899);transform-origin:0 0;">C:\Users\Aarti\Documents\</div>
<div class="t" style="left:545.1px;top:279.50px;font-size:15px;color:#0c140a;font-weight:normal;-webkit-text-stroke:0.25px currentColor;transform:scaleX(0.8769);transform-origin:0 0;">82</div>
<div class="t" style="left:101.9px;top:465.30px;font-size:15px;color:#2a1208;font-weight:normal;-webkit-text-stroke:0.25px currentColor;transform:scaleX(0.9739);transform-origin:0 0;">Following returned memory information in earlier versions of Excel and</div>
<div class="r" style="left:531px;top:265px;width:59px;height:36px;background:transparent;box-sizing:border-box;border:3px solid #c42a32;"></div>
<div class="r" style="left:560.5px;top:287.5px;width:3.5px;height:3.5px;background:#2a6040;"></div>
<div class="r" style="left:695px;top:207px;width:19px;height:271px;background:#161616;"></div>
<div class="r" style="left:700.5px;top:221px;width:7px;height:121px;background:#8c8c8c;border-radius:4px;"></div>
<div class="r" style="left:88px;top:478px;width:60px;height:6px;background:#ffffff;"></div>
<div class="r" style="left:0px;top:478px;width:91.6px;height:27px;background:#19191a;border-top-right-radius:4px;"></div>
<div class="r" style="left:142.8px;top:478px;width:571.2px;height:27px;background:#19191a;border-top-left-radius:4px;"></div>
<div class="r" style="left:91.6px;top:478px;width:51.2px;height:23.5px;background:#ffffff;border-radius:0 0 4px 4px;"></div>
<div class="r" style="left:87px;top:501.5px;width:60px;height:4px;background:#19191a;"></div>
<div class="r" style="left:91.6px;top:478px;width:51.2px;height:23.5px;background:#ffffff;border-radius:0 0 4px 4px;"></div>
<div class="t" style="left:99.2px;top:489.93px;font-size:10.6px;color:#1a1a1a;font-weight:normal;-webkit-text-stroke:0.25px currentColor;transform:scaleX(1.0654);transform-origin:0 0;">Sheet2</div>
<div class="r" style="left:99px;top:498px;width:36.5px;height:1.8px;background:#2f604a;"></div>
<div class="r" style="left:145.5px;top:484px;width:1px;height:15px;background:#383838;"></div>
<svg class="r" style="left:0px;top:0px;" width="714" height="522" viewBox="0 0 714 522"><path d="M23 487.4 L18.2 491.6 L23 495.8 M45.6 487.4 L50.6 491.6 L45.6 495.8" fill="none" stroke="#9a9a9a" stroke-width="1.1"/>
<path d="M186.6 486.6 V495.8 M182.1 491.2 H191.2" stroke="#e0e0e0" stroke-width="1.1"/>
<circle cx="429.4" cy="488.2" r="1" fill="#d8d8d8"/><circle cx="429.4" cy="492" r="1" fill="#d8d8d8"/><circle cx="429.4" cy="495.8" r="1" fill="#d8d8d8"/>
<path d="M453 488 L447.6 491.4 L453 494.8 Z" fill="#9a9a9a"/>
<path d="M686.6 488 L692 491.4 L686.6 494.8 Z" fill="#9a9a9a"/>
<path d="M699.6 214.6 L703.8 210.4 L708 214.6 Z" fill="#9a9a9a"/>
<path d="M699.6 470 L703.8 474.2 L708 470 Z" fill="#9a9a9a"/></svg>
<div class="r" style="left:458.2px;top:488px;width:168px;height:7px;background:#a0a0a0;border-radius:3.5px;"></div>
<div class="r" style="left:0px;top:505px;width:714px;height:17px;background:#161616;"></div>
<div class="r" style="left:0px;top:505px;width:714px;height:1px;background:#2a2a2a;"></div>
<div class="r" style="left:451.4px;top:506px;width:33px;height:16px;background:#242424;"></div>
<div class="t" style="left:7.7px;top:515.24px;font-size:9.4px;color:#e4e4e4;font-weight:normal;transform:scaleX(0.8908);transform-origin:0 0;">Ready</div>
<div class="t" style="left:89.7px;top:515.88px;font-size:9px;color:#f0f0f0;font-weight:bold;transform:scaleX(0.9791);transform-origin:0 0;">Accessibility: Investigate</div>
<div class="t" style="left:674.6px;top:515.74px;font-size:9.4px;color:#e4e4e4;font-weight:normal;transform:scaleX(0.8935);transform-origin:0 0;">100%</div>
<svg class="r" style="left:0px;top:0px;" width="714" height="522" viewBox="0 0 714 522"><path d="M48.2 520.4 H47.4 V511 Q47.4 510 48.4 510 H58.8 Q59.8 510 59.8 511 V514.4" fill="none" stroke="#d8d8d8" stroke-width="1.1"/>
<path d="M47.4 512.6 H59.8 M49.6 515.4 H52.4 M49.6 518.2 H51.6" stroke="#d8d8d8" stroke-width="1.1"/>
<circle cx="55.6" cy="518" r="2.7" fill="none" stroke="#e0e0e0" stroke-width="1.2"/><circle cx="55.6" cy="518" r="1.2" fill="#e0e0e0"/>
<circle cx="80.6" cy="511.2" r="1.7" fill="none" stroke="#e0e0e0" stroke-width="1.1"/>
<path d="M74.6 511.4 Q76.6 514.2 79.2 513.8 H82 Q84.6 514.2 86 511.4 M79.2 513.8 L78.6 517.6 L76.6 522 M81.8 514 L82.4 517 L85.4 521.6 M78.6 517.4 L82.4 522 M83.4 516.6 L80.2 520" fill="none" stroke="#e0e0e0" stroke-width="1.1" stroke-linejoin="round"/>
<rect x="462.2" y="509.6" width="10.8" height="10" fill="none" stroke="#e8e8e8" stroke-width="1.1"/>
<path d="M465.8 509.6 V519.6 M469.4 509.6 V519.6 M462.2 513 H473 M462.2 516.3 H473" stroke="#e8e8e8" stroke-width="1.1"/>
<rect x="496.4" y="509.6" width="11.4" height="10" fill="none" stroke="#e0e0e0" stroke-width="1.1"/>
<rect x="499.2" y="511.8" width="5.8" height="5.6" fill="none" stroke="#e0e0e0" stroke-width="1"/>
<path d="M500.6 514.6 H503.6" stroke="#e0e0e0" stroke-width="1"/>
<path d="M530.4 509.6 V519.6 H541.4 V509.6 H530.4 M533.2 509.6 V515 H536.6 V509.6" fill="none" stroke="#e0e0e0" stroke-width="1.1"/>
<path d="M557.8 515.2 H564" stroke="#8a8a8a" stroke-width="1.1"/>
<path d="M568.8 515.2 H652.7" stroke="#bdbdbd" stroke-width="1.2"/>
<rect x="608.4" y="510.2" width="4.4" height="10" rx="0.8" fill="#c8c8c8"/>
<path d="M657 515.2 H663.2 M660.1 512.2 V518.2" stroke="#bdbdbd" stroke-width="1.1"/></svg>
<svg class="r" style="left:0px;top:0px;" width="714" height="522" viewBox="0 0 714 522"><path d="M78.6 166.2 L82.4 170.2 L86.2 166.2" fill="none" stroke="#e0e0e0" stroke-width="1.2" stroke-linecap="round"/>
<circle cx="99" cy="163.6" r="0.95" fill="#e8e8e8"/><circle cx="99" cy="167.4" r="0.95" fill="#e8e8e8"/><circle cx="99" cy="171.2" r="0.95" fill="#e8e8e8"/>
<path d="M113.6 162.8 L123.6 172.8 M123.6 162.8 L113.6 172.8" stroke="#7c7c7c" stroke-width="1.1" fill="none"/>
<path d="M132.4 167.4 L138.6 172.2 L145.6 163.6" stroke="#7c7c7c" stroke-width="1.1" fill="none"/>
<path d="M691.6 168.6 L696.4 164 L701.2 168.6" fill="none" stroke="#d8d8d8" stroke-width="1.2"/></svg>
<div class="t" style="left:152.6px;top:167.18px;font-size:14.5px;color:#e4e4e4;font-weight:normal;font-family:'Liberation Serif',serif;font-style:italic;">f</div>
<div class="t" style="left:158.2px;top:167.87px;font-size:12.5px;color:#e4e4e4;font-weight:normal;font-family:'Liberation Serif',serif;font-style:italic;">x</div>
</body></html>
